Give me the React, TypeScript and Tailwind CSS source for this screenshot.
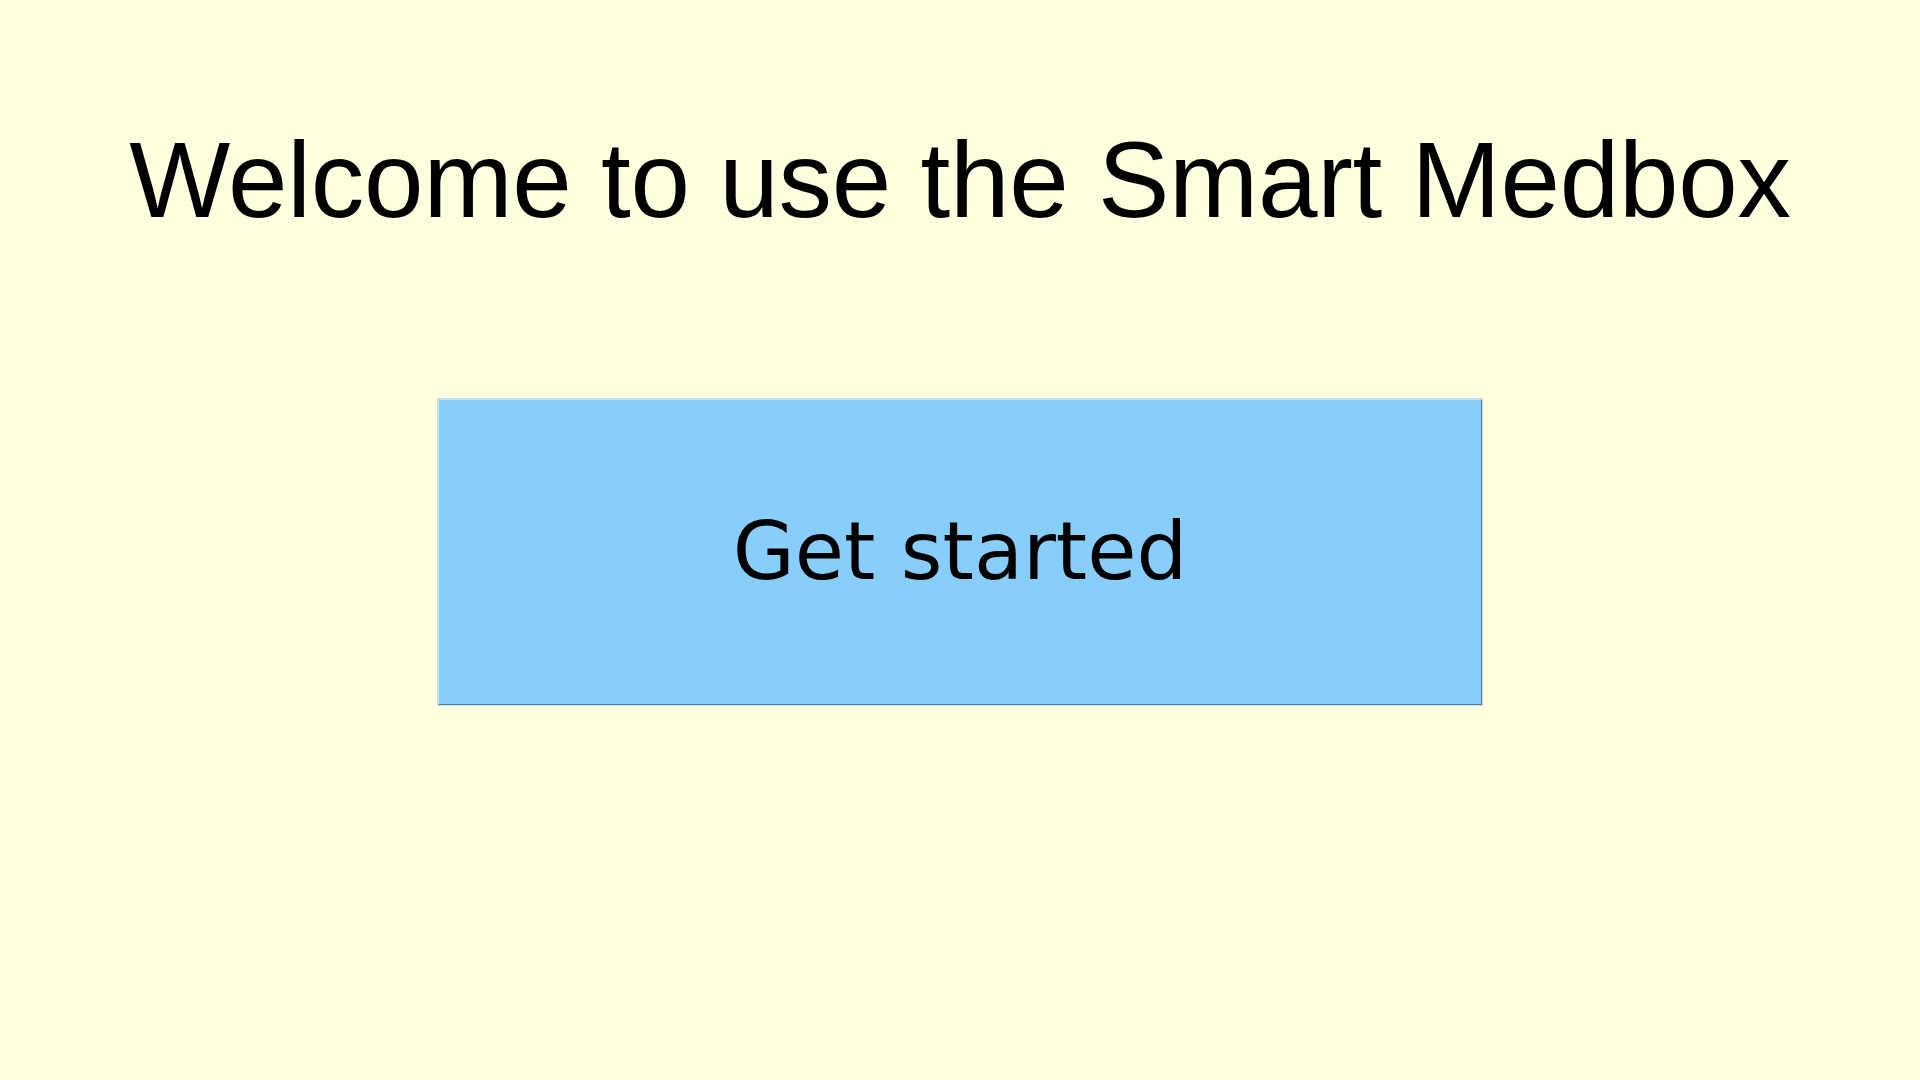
export default function App() {
  return (
    <main className="w-[1920px] h-[1080px] bg-[#ffffe0] flex flex-col items-center pt-[120px]">
      <h1
        className="text-[107px] leading-[120px] tracking-[-0.25px] text-black whitespace-nowrap"
        style={{ fontFamily: "'Liberation Sans', Arial, sans-serif" }}
      >
        Welcome to use the Smart Medbox
      </h1>

      <div className="mt-[158px] border border-[#d9d9d9]">
        <button
          type="button"
          className="w-[1044px] h-[306px] flex items-center justify-center bg-[#87cefa] border border-t-[#b8e6ff] border-l-[#b8e6ff] border-r-[#4e7c9c] border-b-[#4e7c9c] text-black text-[80px] leading-none"
          style={{ fontFamily: "'DejaVu Sans', sans-serif" }}
        >
          Get started
        </button>
      </div>
    </main>
  );
}
